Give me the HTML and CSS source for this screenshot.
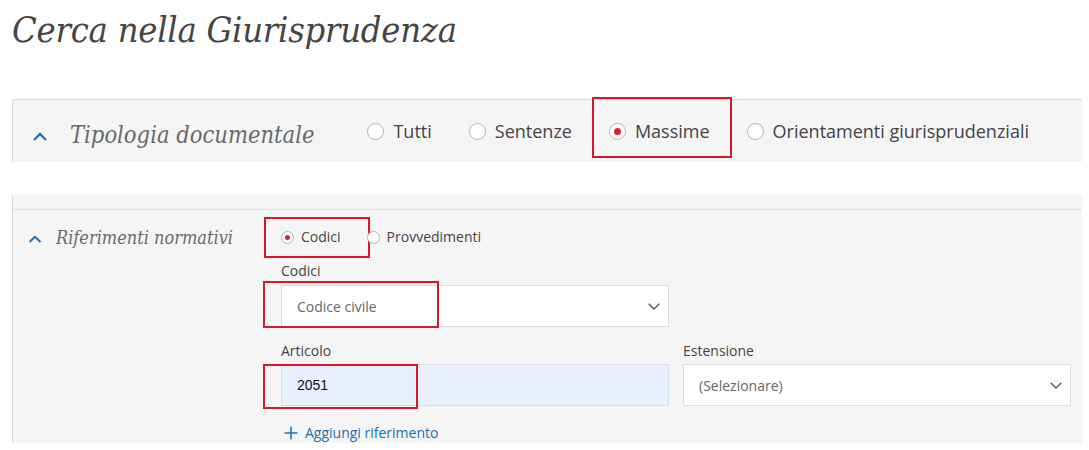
FILE: index.html
```html
<!DOCTYPE html>
<html lang="it">
<head>
<meta charset="utf-8">
<title>Cerca nella Giurisprudenza</title>
<link rel="stylesheet" href="styles.css">
</head>
<body>
<div class="page">
  <h1 class="title">Cerca nella Giurisprudenza</h1>

  <section class="panel panel-type">
    <svg class="chev chev-lg" width="14" height="9" viewBox="0 0 14 9"><polyline points="1,8 7,2 13,8" fill="none" stroke="#1f6fb2" stroke-width="2.4"/></svg>
    <h2 class="panel-title">Tipologia documentale</h2>
    <div class="radios-lg">
      <label class="radio-lg"><span class="dot"></span>Tutti</label>
      <label class="radio-lg"><span class="dot"></span>Sentenze</label>
      <label class="radio-lg marked"><span class="dot checked"></span>Massime</label>
      <label class="radio-lg"><span class="dot"></span>Orientamenti giurisprudenziali</label>
    </div>
  </section>

  <div class="panel-strip"></div>
  <section class="panel panel-refs">
    <div class="refs-head">
      <svg class="chev chev-sm" width="14" height="8" viewBox="0 0 14 8"><polyline points="1.5,7 7,1.8 12.5,7" fill="none" stroke="#1f6fb2" stroke-width="2"/></svg>
      <h3 class="refs-title">Riferimenti normativi</h3>
    </div>
    <div class="refs-form">
      <div class="radios-sm">
        <label class="radio-sm marked-sm"><span class="dot-sm checked"></span>Codici</label>
        <label class="radio-sm"><span class="dot-sm"></span>Provvedimenti</label>
      </div>
      <div class="field field-codici">
        <div class="field-label">Codici</div>
        <div class="select marked-select">
          <span class="select-text">Codice civile</span>
          <svg width="12" height="7" viewBox="0 0 12 7"><polyline points="0.7,0.7 6,6 11.3,0.7" fill="none" stroke="#555" stroke-width="1.3"/></svg>
        </div>
      </div>
      <div class="field-row">
        <div class="field">
          <div class="field-label">Articolo</div>
          <div class="input marked-input">2051</div>
        </div>
        <div class="field">
          <div class="field-label">Estensione</div>
          <div class="select">
            <span class="select-text">(Selezionare)</span>
            <svg width="12" height="7" viewBox="0 0 12 7"><polyline points="0.7,0.7 6,6 11.3,0.7" fill="none" stroke="#555" stroke-width="1.3"/></svg>
          </div>
        </div>
      </div>
      <a class="add-link" href="#"><svg width="14" height="14" viewBox="0 0 14 14"><path d="M7 0.5V13.5M0.5 7H13.5" stroke="#1f6fb2" stroke-width="1.5" fill="none"/></svg>Aggiungi riferimento</a>
    </div>
  </section>
</div>
</body>
</html>
```

FILE: styles.css
```css
* { box-sizing: border-box; }

body {
  margin: 0;
  background: #ffffff;
  font-family: "Open Sans", "Noto Sans", sans-serif;
  color: #444;
}

.page {
  padding-left: 12px;
  width: 1082px;
}

.title {
  margin: 0;
  padding-top: 12px;
  font-family: "DejaVu Serif Condensed", "DejaVu Serif", serif;
  font-stretch: condensed;
  font-style: italic;
  font-weight: normal;
  font-size: 36px;
  line-height: 36px;
  color: #454545;
  letter-spacing: -0.25px;
}

.panel {
  background: #f5f5f5;
  border-left: 1px solid #dcdcdc;
}

.panel-type {
  margin-top: 51px;
  height: 63px;
  border-top: 1px solid #dcdcdc;
  display: flex;
  align-items: center;
  padding-left: 20px;
}

.chev { display: block; flex: none; }
.chev-lg { margin-top: 10px; }

.panel-title {
  margin: 0 0 0 23px;
  padding-top: 8px;
  font-family: "DejaVu Serif Condensed", "DejaVu Serif", serif;
  font-stretch: condensed;
  font-style: italic;
  font-weight: normal;
  font-size: 23.5px;
  line-height: 30px;
  color: #6a6a6a;
}

.radios-lg {
  display: flex;
  align-items: center;
  gap: 37px;
  margin-left: 53px;
}

.radio-lg {
  position: relative;
  display: flex;
  align-items: center;
  gap: 9px;
  font-size: 18px;
  line-height: 24px;
  color: #444;
}

.dot {
  width: 17px;
  height: 17px;
  border-radius: 50%;
  border: 1px solid #b5b5b5;
  background: #fff;
  display: flex;
  align-items: center;
  justify-content: center;
  flex: none;
}

.dot.checked::before,
.dot-sm.checked::before {
  content: "";
  width: 7px;
  height: 7px;
  border-radius: 50%;
  background: #e0202e;
}
.dot-sm.checked::before { width: 5px; height: 5px; }

.marked::after {
  content: "";
  position: absolute;
  left: -17px;
  right: -22px;
  top: 50%;
  margin-top: -34px;
  height: 57px;
  border: 2px solid #d7182a;
}

.panel-strip {
  margin-top: 33px;
  height: 14px;
  background: #f5f5f5;
  border-left: 1px solid #dcdcdc;
}

.panel-refs {
  border-top: 1px solid #dedede;
  display: flex;
  padding-left: 15px;
  height: 234px;
}

.refs-head {
  width: 253px;
  flex: none;
  display: flex;
  align-items: flex-start;
  padding-top: 24px;
}

.chev-sm { margin-top: 1px; }

.refs-title {
  margin: -8px 0 0 14px;
  font-family: "DejaVu Serif Condensed", "DejaVu Serif", serif;
  font-stretch: condensed;
  font-style: italic;
  font-weight: normal;
  font-size: 18px;
  line-height: 24px;
  color: #6a6a6a;
}

.refs-form {
  width: 790px;
  padding-top: 17px;
  display: flex;
  flex-direction: column;
}

.radios-sm {
  display: flex;
  align-items: center;
  gap: 26px;
  height: 20px;
}

.radio-sm {
  position: relative;
  display: flex;
  align-items: center;
  gap: 7px;
  font-size: 14px;
  line-height: 20px;
  color: #444;
}

.dot-sm {
  width: 13px;
  height: 13px;
  border-radius: 50%;
  border: 1px solid #b5b5b5;
  background: #fff;
  display: flex;
  align-items: center;
  justify-content: center;
  flex: none;
}

.marked-sm::after {
  content: "";
  position: absolute;
  left: -17px;
  width: 102px;
  top: 50%;
  margin-top: -20px;
  height: 37px;
  border: 2px solid #d7182a;
}

.field-codici { margin-top: 14px; width: 388px; }

.field-label {
  font-size: 14px;
  line-height: 20px;
  color: #444;
  margin-bottom: 4px;
}

.select,
.input {
  position: relative;
  height: 42px;
  border: 1px solid #dedede;
  background: #fff;
  display: flex;
  align-items: center;
  justify-content: space-between;
  padding: 0 8px 0 15px;
}

.select-text {
  font-size: 14px;
  color: #666;
}

.input {
  background: #e8f0fe;
  font-family: "Liberation Sans", Arial, sans-serif;
  font-size: 14px;
  color: #111;
  border-color: #d8dde6;
}

.marked-select::after {
  content: "";
  position: absolute;
  left: -19px;
  top: -5px;
  width: 172px;
  height: 43px;
  border: 2px solid #d7182a;
}

.marked-input::after {
  content: "";
  position: absolute;
  left: -19px;
  top: -1px;
  width: 151px;
  height: 41px;
  border: 2px solid #d7182a;
}

.field-row {
  display: grid;
  grid-template-columns: 388px 388px;
  column-gap: 14px;
  margin-top: 14px;
}

.field-row .field-label { margin-bottom: 3px; }

.add-link {
  margin-top: 17px;
  margin-left: 3px;
  display: flex;
  align-items: center;
  gap: 7px;
  font-size: 14px;
  line-height: 20px;
  color: #1f6fb2;
  text-decoration: none;
}
```
